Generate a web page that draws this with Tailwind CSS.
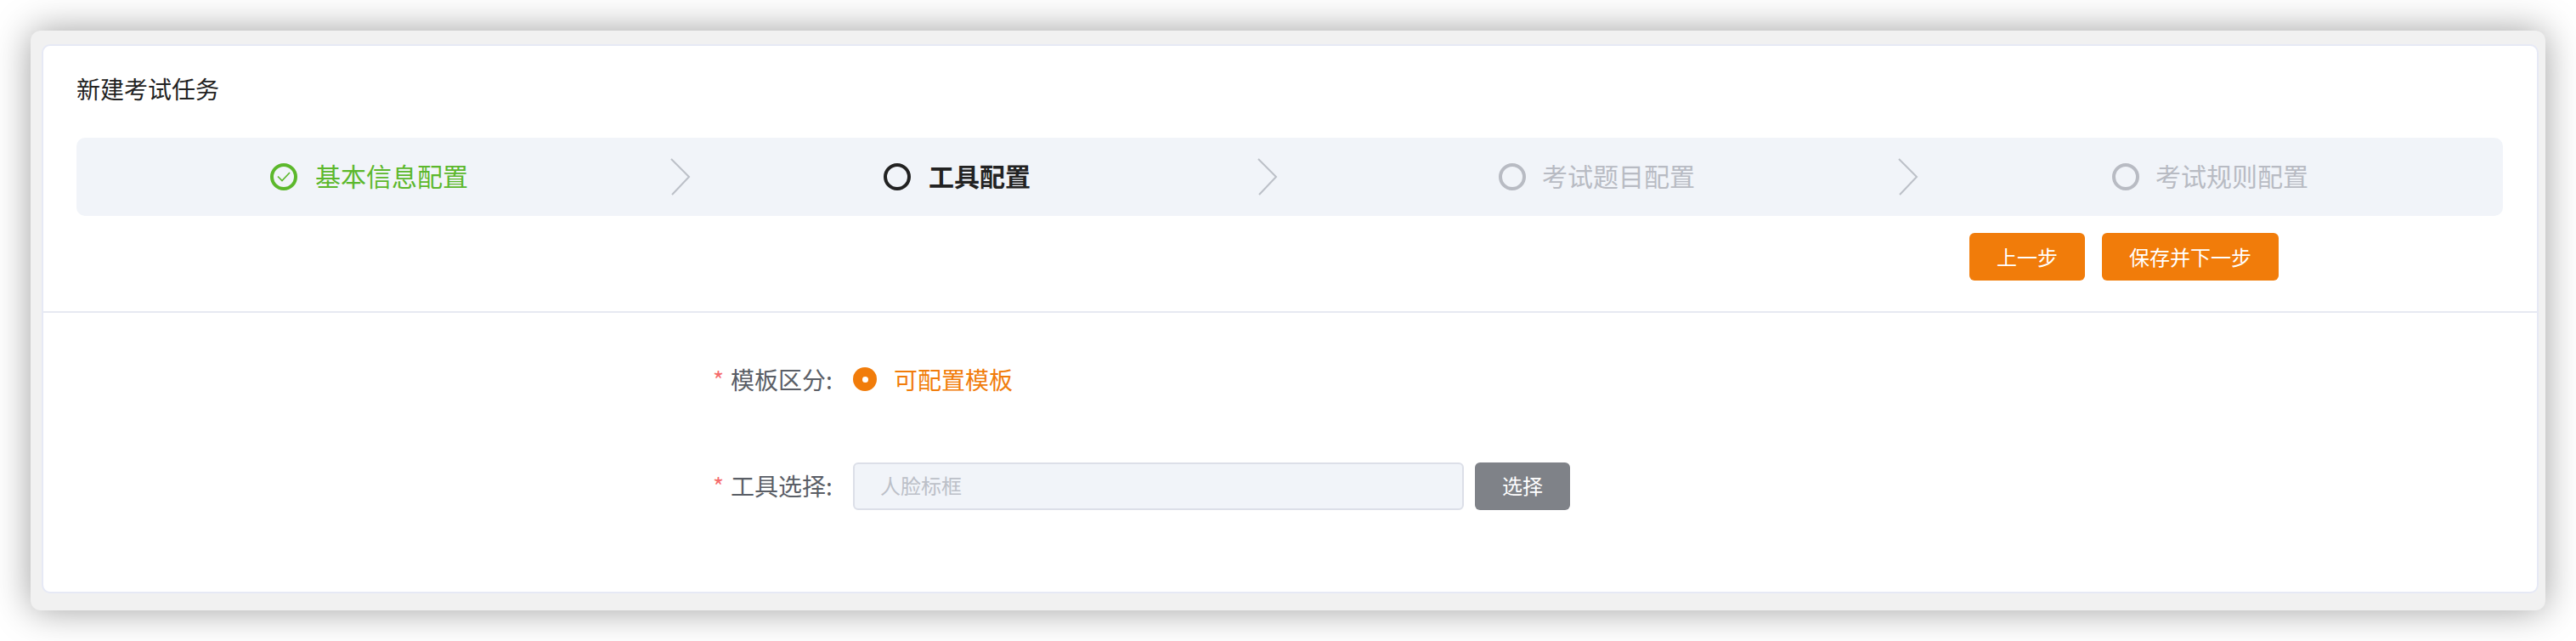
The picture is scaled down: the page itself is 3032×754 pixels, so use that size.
<!DOCTYPE html>
<html lang="zh-CN">
<head>
  <meta charset="UTF-8" />
  <title>新建考试任务</title>
  <script src="https://cdn.jsdelivr.net/npm/@tailwindcss/browser@4"></script>
</head>
<body class="bg-white font-['Noto_Sans_CJK_SC','Noto_Sans',sans-serif] h-[754px] overflow-hidden">
  <div class="pt-9 pl-9 w-[2960px]">
    <!-- Window -->
    <div class="w-[2960px] h-[682px] bg-[#f1f1f1] rounded-[12px] shadow-[0_0_44px_rgba(0,0,0,0.38)] pt-4 pl-[13px]">
      <div class="w-[2939px] h-[646px] bg-white rounded-[10px] border-2 border-[#e6e9f5]">

        <div class="pl-[39px] pr-[40px] pt-[32px] h-[314px] border-b-2 border-[#e6e9f2]">
          <h1 class="text-[28px] leading-[36px] text-[#222]">新建考试任务</h1>

          <!-- Steps -->
          <div class="flex items-center h-[92px] mt-[40px] bg-[#f1f4f9] rounded-[10px] text-[30px]">
            <div class="ml-[228px] w-[32px] h-[32px] rounded-full border-4 border-[#5cb82c] flex items-center justify-center">
              <svg width="16" height="12" viewBox="0 0 16 12" fill="none" stroke="#5cb82c" stroke-width="1.7"><path d="M1 5.5l5 5 9-9.5" /></svg>
            </div>
            <span class="ml-[21px] -mt-[4px] text-[#5cb82c]">基本信息配置</span>
            <svg class="ml-[238px]" width="24" height="44" viewBox="0 0 24 44" fill="none" stroke="#bcc0c8" stroke-width="2"><path d="M1 1l21 21L2 43" /></svg>

            <div class="ml-[227px] w-[32px] h-[32px] rounded-full border-4 border-[#222]"></div>
            <span class="ml-[21px] -mt-[4px] font-bold text-[#222]">工具配置</span>
            <svg class="ml-[267px]" width="24" height="44" viewBox="0 0 24 44" fill="none" stroke="#bcc0c8" stroke-width="2"><path d="M1 1l21 21L2 43" /></svg>

            <div class="ml-[260px] w-[32px] h-[32px] rounded-full border-4 border-[#b8bbc3]"></div>
            <span class="ml-[19px] -mt-[4px] text-[#b8bbc3]">考试题目配置</span>
            <svg class="ml-[239px]" width="24" height="44" viewBox="0 0 24 44" fill="none" stroke="#bcc0c8" stroke-width="2"><path d="M1 1l21 21L2 43" /></svg>

            <div class="ml-[228px] w-[32px] h-[32px] rounded-full border-4 border-[#b8bbc3]"></div>
            <span class="ml-[19px] -mt-[4px] text-[#b8bbc3]">考试规则配置</span>
          </div>

          <div class="flex justify-end gap-[20px] mt-[20px] pr-[264px]">
            <button class="w-[136px] h-[56px] pb-[1px] bg-[#f17c0a] text-white text-[24px] rounded-[6px]">上一步</button>
            <button class="w-[208px] h-[56px] pb-[1px] bg-[#f17c0a] text-white text-[24px] rounded-[6px]">保存并下一步</button>
          </div>
        </div>

        <!-- Form -->
        <div class="pt-[62px] pl-[788px] text-[28px] text-[#5a5e66]">
          <div class="flex items-center h-[32px]">
            <label class="w-[165px] flex items-center"><span class="text-[#f56c6c] mr-[8px]">*</span>模板区分:</label>
            <span class="w-[28px] h-[28px] rounded-full bg-[#f17c0a] flex items-center justify-center"><span class="w-[7px] h-[7px] rounded-full bg-white"></span></span>
            <span class="ml-[20px] text-[#f17c0a]">可配置模板</span>
          </div>
          <div class="flex items-center h-[56px] mt-[82px]">
            <label class="w-[165px] pb-[3px] flex items-center"><span class="text-[#f56c6c] mr-[8px]">*</span>工具选择:</label>
            <div class="w-[719px] h-[56px] bg-[#f1f4f9] border-2 border-[#dcdfe8] rounded-[6px] pl-[30px] pb-[3px] flex items-center text-[24px] text-[#bcc0c8]">人脸标框</div>
            <button class="ml-[13px] w-[112px] h-[56px] pb-[3px] bg-[#7f8288] text-white text-[24px] rounded-[6px]">选择</button>
          </div>
        </div>
      </div>
    </div>
  </div>
</body>
</html>
